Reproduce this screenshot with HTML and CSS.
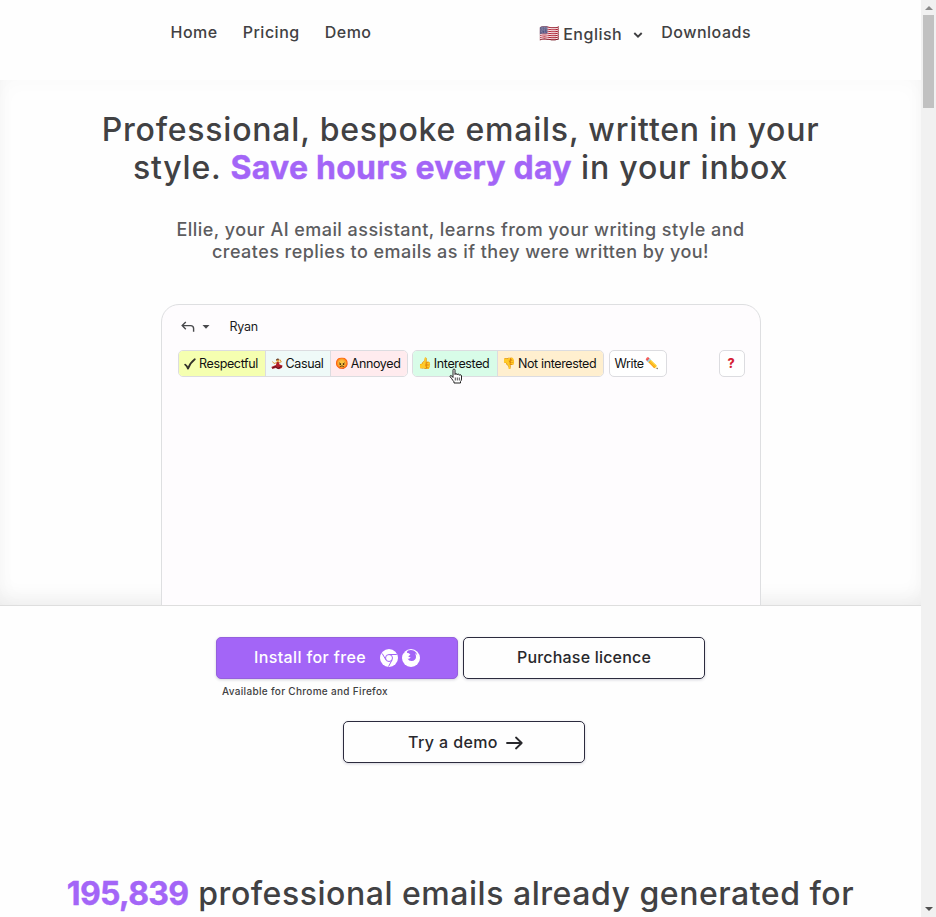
FILE: index.html
```html
<!DOCTYPE html>
<html lang="en">
<head>
<meta charset="utf-8">
<title>Ellie, your AI email assistant</title>
<link rel="stylesheet" href="styles.css">
</head>
<body>
<div class="page">
  <header class="nav">
    <nav class="nav-links"><a>Home</a><a>Pricing</a><a>Demo</a></nav>
    <div class="nav-right">
      <div class="lang">
        <i class="flag">🇺🇸</i>
        <span>English</span>
        <svg class="chev" viewBox="0 0 10 6"><path d="M1.3 1l3.7 3.6L8.7 1" fill="none" stroke="#3f3f41" stroke-width="1.9"/></svg>
      </div>
      <a>Downloads</a>
    </div>
  </header>

  <section class="hero">
    <h1><span>Professional, bespoke emails, written in your</span><span>style. <b>Save hours every day</b> in your inbox</span></h1>
    <p class="sub"><span>Ellie, your AI email assistant, learns from your writing style and</span><span>creates replies to emails as if they were written by you!</span></p>
    <div class="mail">
      <div class="mail-to">
        <svg class="reply" viewBox="0 0 14 12"><path d="M4.8 1L1.2 4.6l3.6 3.6M1.4 4.6h8.2q3 0 3 3v3.2" fill="none" stroke="#48494c" stroke-width="1.4"/></svg>
        <svg class="caret" viewBox="0 0 8 4"><path d="M.5 0h7L4 3.8z" fill="#48494c"/></svg>
        <span>Ryan</span>
      </div>
      <div class="tools">
        <div class="group g1">
          <span class="chip c-resp"><svg class="ico" viewBox="0 0 12 12"><path d="M1.2 6.6Q3 8 4 10.6Q6.300 4.500 10.800 1.200" fill="none" stroke="#33332b" stroke-width="1.8" stroke-linejoin="round" stroke-linecap="round"/></svg>Respectful</span>
          <span class="chip c-cas"><svg class="dancer" viewBox="0 0 12 12"><path d="M5.500 4L7.800 3.800L8.500 6.500L11.500 7.500L11 9.800L8 11.300L4.500 10L1.500 11L.3 9L2.500 8L5 7Z" fill="#b3202a"/><path d="M1.500 10L4.500 8.500L7 10.500L10.500 8.500" fill="none" stroke="#5c1420" stroke-width="1"/><path d="M6 4.500L3 5.500L1.500 3.500M7.700 4.500L10.300 4L9 1.500" fill="none" stroke="#dc9a3c" stroke-width="1"/><circle cx="6.800" cy="2.300" r="1.600" fill="#dc9a3c"/><path d="M5 2.500Q5 .4 7 .4Q8.300 .6 8.300 1.700Q6.500 1.200 5 2.500Z" fill="#4a2420"/></svg>Casual</span>
          <span class="chip c-ann"><i class="emo">😡</i>Annoyed</span>
        </div>
        <div class="group g2">
          <span class="chip c-int"><i class="emo">👍</i>Interested</span>
          <span class="chip c-not"><i class="emo">👎</i>Not interested</span>
        </div>
        <div class="group g3"><span class="chip c-write">Write<i class="emo">✏️</i></span></div>
        <div class="group g4"><span class="chip c-help">?</span></div>
        <svg class="hand" viewBox="0 0 14 16"><path d="M4 9.500V2.200Q4 1 5 1T6 2.200V6.500Q6 5.600 7 5.600T8.200 6.800Q8.300 6 9.200 6T10.400 7.300Q10.500 6.700 11.300 6.700T12.500 8V11Q12.500 12.500 11.500 13.500V15H5V13.800Q3.800 12.500 2.800 10.800L1.100 8.700Q.8 7.700 1.800 7.500Q2.800 7.500 4 9.500Z" fill="#fff" stroke="#222" stroke-width="1"/><path d="M6.300 9.500v3M8.300 9.500v3M10.300 9.500v3" stroke="#222" stroke-width=".8"/></svg>
      </div>
    </div>
  </section>

  <section class="cta">
    <div class="row">
      <div class="install-col">
        <a class="btn primary"><span>Install for free</span>
          <svg class="brand" viewBox="0 0 18 18"><circle cx="9" cy="9" r="9" fill="#fff"/><circle cx="9" cy="9" r="3.500" fill="none" stroke="#a365f7" stroke-width="1"/><path d="M9 5.500h7.800M5.900 10.800L2.200 4.500M12.100 10.800L8.500 17.600" fill="none" stroke="#a365f7" stroke-width="1"/></svg>
          <svg class="brand" viewBox="0 0 18 18"><circle cx="9" cy="9" r="9" fill="#fff"/><path d="M6 1.500Q4.800 2.600 4.900 3.800L6.900 4.300L8.400 5.700Q6.600 6.500 6.300 7.600Q7.200 8.600 8.700 8.300Q7.800 10.300 5.600 9.500Q6.800 12.200 9.800 12Q13.600 11.500 14 8.200Q14.200 5.700 12.900 4.200Q14.600 4.900 15.400 6.500Q14.800 3.200 12.200 1.700Q9 .200 6 1.500ZM0 4.500L2 1V4.200L3.200 3.200Z" fill="#a365f7"/></svg>
        </a>
        <small>Available for Chrome and Firefox</small>
      </div>
      <a class="btn buy"><span>Purchase licence</span></a>
    </div>
    <a class="btn demo"><span>Try a demo</span><svg class="arrow" viewBox="0 0 17 14"><path d="M1 7h14.500M10 1.500L15.700 7L10 12.500" fill="none" stroke="#28282c" stroke-width="1.800" stroke-linecap="round" stroke-linejoin="round"/></svg></a>
    <h2><b>195,839</b><span>professional emails already generated for</span></h2>
  </section>
</div>
<aside class="scrollbar"><i class="up"></i><i class="thumb"></i><i class="down"></i></aside>
</body>
</html>
```
FILE: styles.css
```css
* { box-sizing: border-box; }
body { margin: 0; width: 936px; height: 917px; overflow: hidden; display: flex; background: #fefefe; color: #414143; font-family: Inter, "Open Sans", sans-serif; font-weight: 500; }
.page { width: 921px; height: 917px; overflow: hidden; }
span, a, small, b { white-space: nowrap; }
svg { flex: none; }
.nav { height: 80px; padding: 22px 170px 0 170.500px; display: flex; justify-content: space-between; font-size: 16px; line-height: 20px; letter-spacing: .5px; }
.nav-links { display: flex; gap: 25px; }
.nav-right { display: flex; gap: 17px; }
.lang { display: flex; align-items: center; height: 24px; }
.flag { width: 21px; margin-right: 3px; font: normal 16.500px/24px "Noto Color Emoji", sans-serif; letter-spacing: 0; }
.chev { width: 10px; height: 6px; margin: 1px 1px 0 11px; }
.hero { height: 526px; padding-top: 31px; display: flex; flex-direction: column; align-items: center; border-bottom: 1px solid #dedede; box-shadow: inset 0 -12px 22px -8px rgba(0,0,0,.07), inset 0 0 22px rgba(0,0,0,.025); overflow: hidden; }
h1, h2, p { margin: 0; font-weight: 500; }
h1 { font-size: 32px; line-height: 38px; letter-spacing: .79px; }
h1 span, .sub span { display: block; width: max-content; margin: 0 auto; }
h1 b, h2 b { color: #a365f7; font-weight: 700; letter-spacing: .25px; -webkit-text-stroke: .4px #a365f7; }
.sub { margin-top: 32px; font-size: 18px; line-height: 22px; letter-spacing: .45px; color: #5c5c5e; }
.mail { width: 600px; height: 320px; flex: none; margin-top: 41px; padding: 12px 15px 0 16px; border: 1px solid #dedfe1; border-radius: 18px 18px 0 0; background: #fefcfe; color: #1c1c1e; }
.mail-to { height: 20px; display: flex; align-items: center; font: 12.500px/20px Inter, sans-serif; letter-spacing: -.3px; padding-left: 3px; }
.reply { width: 14px; height: 12px; }
.caret { width: 8px; height: 4px; margin: 0 20px 0 7px; }
.tools { position: relative; margin-top: 13px; display: flex; font: 12.500px/25px Inter, sans-serif; letter-spacing: -.37px; color: #111; }
.group { height: 27px; display: flex; border: 1px solid #dcdce0; border-radius: 5px; overflow: hidden; background: #fff; }
.chip { display: flex; align-items: center; justify-content: center; padding-right: 1px; }
.chip + .chip { border-left: 1px solid #dcdce0; }
.ico, .dancer { width: 12px; height: 12px; margin-right: 3px; }
.emo { font: normal 11px/25px "Noto Color Emoji", sans-serif; letter-spacing: 0; margin-right: 1.500px; }
.g1 { width: 230px; margin-right: 4px; }
.g2 { width: 192px; margin-right: 5px; }
.g3 { width: 58px; }
.g4 { width: 26px; margin-left: auto; }
.c-resp { width: 86px; background: #f5ffb0; }
.c-cas { width: 65px; background: #effaf8; }
.c-ann { flex: 1; background: #ffebee; }
.c-int { width: 84px; background: #d8fce8; }
.c-not { flex: 1; background: #ffefcf; }
.c-write { flex: 1; }
.c-write .emo { margin: 0 0 0 2px; }
.c-help { flex: 1; color: #d51f35; font-weight: 800; }
.hand { position: absolute; left: 271px; top: 18px; width: 14px; height: 16px; }
.cta { padding-top: 31px; display: flex; flex-direction: column; align-items: center; }
.row { display: flex; gap: 5px; height: 84px; }
.install-col { display: flex; flex-direction: column; }
.btn { width: 242px; height: 42px; display: flex; align-items: center; justify-content: center; border: 1.500px solid #2c2b3e; border-radius: 5px; font-size: 16px; color: #28282c; letter-spacing: .38px; box-shadow: 0 1px 3px rgba(40,40,80,.2); }
.primary { background: #a365f7; border-color: #9560dd; color: #fff; }
.primary span, .buy span { margin-bottom: 2px; }
.buy { letter-spacing: .2px; }
.brand { width: 18px; height: 18px; margin-left: 4px; }
span + .brand { margin-left: 14px; }
small { font-size: 10px; line-height: 12px; margin: 6px 0 0 6px; letter-spacing: .32px; }
.demo { margin-left: 7px; }
.demo span { margin-left: 3px; }
.arrow { width: 17px; height: 14px; margin: 2px 0 0 8px; }
h2 { margin-top: 112px; font-size: 32px; line-height: 38px; display: flex; gap: 10px; letter-spacing: .53px; }
h2 b { letter-spacing: -.7px; }
.scrollbar { width: 15px; height: 917px; background: #f1f1f1; display: flex; flex-direction: column; align-items: center; }
.up { border: 4px solid transparent; border-top: 0; border-bottom: 4px solid #8a8a8a; margin: 6px 0 5px; }
.thumb { width: 11px; height: 93px; background: #c1c1c1; }
.down { border: 4px solid transparent; border-bottom: 0; border-top: 4px solid #505050; margin-top: auto; margin-bottom: 6px; }
```
